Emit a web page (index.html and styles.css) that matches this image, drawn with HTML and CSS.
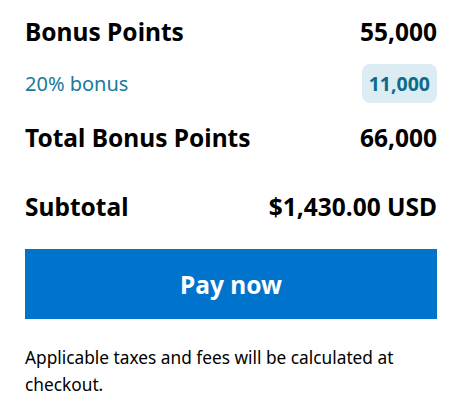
FILE: index.html
```html
<!DOCTYPE html>
<html lang="en">
<head>
  <meta charset="UTF-8" />
  <title>Order summary</title>
  <link rel="stylesheet" href="styles.css">
</head>
<body>
  <main class="summary">
    <div class="row row-main">
      <span>Bonus Points</span>
      <span>55,000</span>
    </div>
    <div class="row row-bonus">
      <span>20% bonus</span>
      <span class="badge">11,000</span>
    </div>
    <div class="row row-main row-total">
      <span>Total Bonus Points</span>
      <span>66,000</span>
    </div>
    <div class="row row-main row-subtotal">
      <span>Subtotal</span>
      <span>$1,430.00 USD</span>
    </div>
    <button class="pay-btn" type="button">Pay now</button>
    <p class="note">Applicable taxes and fees will be calculated at checkout.</p>
  </main>
</body>
</html>
```

FILE: styles.css
```css
* {
  margin: 0;
  padding: 0;
  box-sizing: border-box;
}

body {
  font-family: 'Noto Sans', sans-serif;
  color: #000;
  background: #fff;
}

.summary {
  padding: 16px 24px 0 25px;
}

.row {
  display: flex;
  justify-content: space-between;
  align-items: center;
}

.row-main {
  font-size: 24.5px;
  font-weight: bold;
  line-height: 32px;
}

.row-bonus {
  margin-top: 16px;
  font-size: 20px;
  line-height: 27px;
  color: #1a7a9a;
}

.badge {
  background: #dcecf3;
  color: #0e6a8a;
  font-size: 19.5px;
  font-weight: bold;
  padding: 6px 7px;
  border-radius: 8px;
}

.row-total {
  margin-top: 19px;
}

.row-subtotal {
  margin-top: 37px;
}

.pay-btn {
  display: block;
  width: 100%;
  height: 70px;
  margin-top: 26px;
  background-color: #0074cc;
  color: white;
  border: none;
  font-family: inherit;
  font-size: 24.5px;
  font-weight: bold;
  cursor: pointer;
}

.note {
  margin-top: 25px;
  font-size: 17.3px;
  line-height: 27px;
}
```
